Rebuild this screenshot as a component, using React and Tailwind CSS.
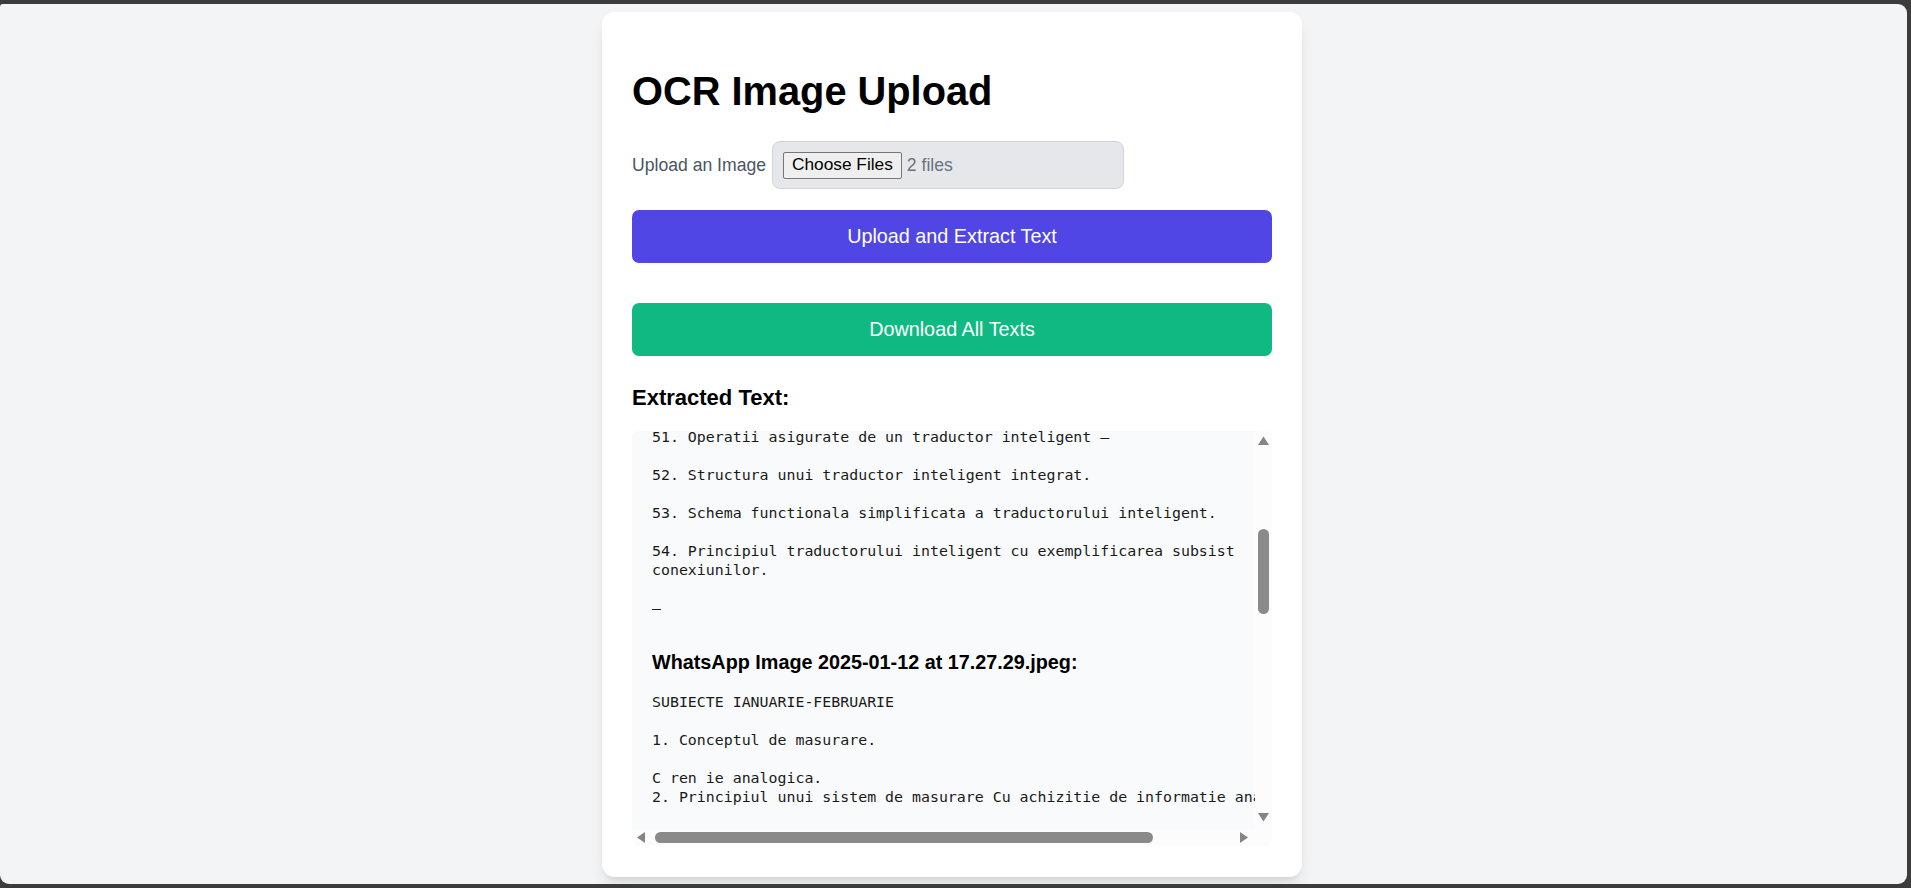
export default function App() {
  const text1 = [
    "51. Operatii asigurate de un traductor inteligent \u2014",
    "",
    "52. Structura unui traductor inteligent integrat.",
    "",
    "53. Schema functionala simplificata a traductorului inteligent.",
    "",
    "54. Principiul traductorului inteligent cu exemplificarea subsist",
    "conexiunilor.",
    "",
    "\u2014",
  ].join("\n");
  const text2 = [
    "SUBIECTE IANUARIE-FEBRUARIE",
    "",
    "1. Conceptul de masurare.",
    "",
    "C ren ie analogica.",
    "2. Principiul unui sistem de masurare Cu achizitie de informatie analogica.",
    "",
  ].join("\n");

  return (
    <div className="h-[888px] w-full overflow-hidden bg-[#3c3c3c] pt-[4px] pb-[4px] pr-[4px] font-['Liberation_Sans',Arial,sans-serif]">
      <div className="h-[880px] overflow-hidden rounded-[9px] rounded-tl-[3px] bg-[#f3f4f6] flex justify-center pr-[3px] pt-[8px]">
        <div className="w-[700px] self-start rounded-[13px] bg-white px-[30px] pt-[59px] pb-[31px] shadow-lg flex flex-col">
          <h1 className="text-[39.8px] leading-[40px] font-bold text-black">OCR Image Upload</h1>

          <div className="mt-[30px] flex h-[48px] items-center">
            <span className="mr-[6px] text-[17.6px] text-[#4b5563]">Upload an Image</span>
            <div className="flex h-[48px] w-[352px] items-center rounded-[8px] border border-[#d1d5db] bg-[#e5e7eb] pl-[10px]">
              <span className="flex h-[27px] items-center rounded-[2px] border border-[#767676] bg-[#efefef] px-[8px] text-[17.3px] text-black">
                Choose Files
              </span>
              <span className="ml-[5px] text-[17.6px] text-[#6b7280]">2 files</span>
            </div>
          </div>

          <button className="mt-[21px] flex h-[53px] w-full items-center justify-center rounded-[7px] bg-[#4f46e5] text-[19.8px] text-white">
            Upload and Extract Text
          </button>
          <button className="mt-[40px] flex h-[53px] w-full items-center justify-center rounded-[7px] bg-[#10b981] text-[19.8px] text-white">
            Download All Texts
          </button>

          <h2 className="mt-[28px] text-[22px] leading-[28px] font-bold text-black">Extracted Text:</h2>

          <div className="mt-[19px] flex h-[415px] flex-col overflow-hidden rounded-[6px] bg-[#f9fafb]">
            <div className="flex min-h-0 flex-1">
              <div className="min-w-0 flex-1 overflow-hidden">
                <div className="-mt-[3px] pl-[20px]">
                  <pre className="whitespace-pre font-['DejaVu_Sans_Mono',monospace] text-[14.9px] leading-[19px] text-[#1a1a1a]">{text1}</pre>
                  <h3 className="mt-[32px] text-[19.8px] leading-[24px] font-bold text-black">
                    WhatsApp Image 2025-01-12 at 17.27.29.jpeg:
                  </h3>
                  <pre className="mt-[19px] whitespace-pre font-['DejaVu_Sans_Mono',monospace] text-[14.9px] leading-[19px] text-[#1a1a1a]">{text2}</pre>
                </div>
              </div>
              <div className="flex w-[17px] flex-col items-center bg-[#fcfcfc]">
                <svg width="17" height="17" viewBox="0 0 17 17" className="shrink-0">
                  <polygon points="8.5,5.5 14,14 3,14" fill="#858585" />
                </svg>
                <div className="mt-[81px] h-[85px] w-[11px] rounded-full bg-[#8a8a8a]" />
                <div className="flex-1" />
                <svg width="17" height="17" viewBox="0 0 17 17" className="shrink-0">
                  <polygon points="3,1 14,1 8.5,9.5" fill="#858585" />
                </svg>
              </div>
            </div>
            <div className="flex h-[17px] items-center bg-[#fcfcfc]">
              <svg width="17" height="17" viewBox="0 0 17 17" className="shrink-0">
                <polygon points="5,8.5 13,3 13,14" fill="#858585" />
              </svg>
              <div className="ml-[6px] h-[11px] w-[498px] rounded-full bg-[#8a8a8a]" />
              <div className="flex-1" />
              <svg width="17" height="17" viewBox="0 0 17 17" className="shrink-0">
                <polygon points="2,3 10,8.5 2,14" fill="#858585" />
              </svg>
              <div className="w-[17px]" />
            </div>
          </div>
        </div>
      </div>
    </div>
  );
}
